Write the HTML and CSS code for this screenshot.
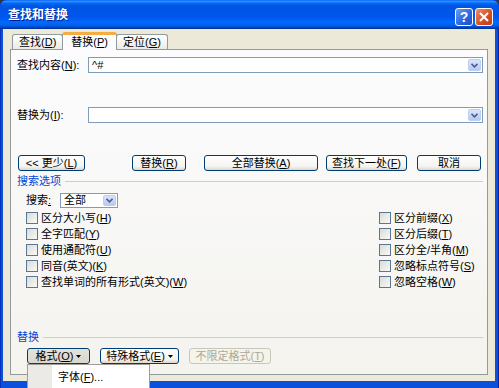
FILE: index.html
```html
<!DOCTYPE html>
<html lang="zh-CN">
<head>
    <meta charset="UTF-8">
    <meta name="viewport" content="width=device-width, initial-scale=1.0">
    <title>查找和替换</title>
    <link rel="stylesheet" href="styles.css">
</head>
<body>
    <div class="window">
        <div class="titlebar">
            <span class="title">查找和替换</span>
            <span class="tb-btn tb-help">?</span>
            <span class="tb-btn tb-close">
                <svg width="10" height="10" viewBox="0 0 10 10"><path d="M1 1L9 9M9 1L1 9" stroke="#fff" stroke-width="2"/></svg>
            </span>
        </div>

        <div class="client">
            <div class="tabs">
                <span class="tab">查找(<u>D</u>)</span>
                <span class="tab active">替换(<u>P</u>)</span>
                <span class="tab">定位(<u>G</u>)</span>
            </div>

            <div class="panel">
                <div class="field-row">
                    <span class="field-label">查找内容(<u>N</u>):</span>
                    <div class="combo">
                        <span class="combo-text">^#</span>
                        <span class="combo-arrow"><svg width="7" height="5" viewBox="0 0 7 5"><path d="M0.5 0.8L3.5 3.8L6.5 0.8" fill="none" stroke="#4d6185" stroke-width="1.6"/></svg></span>
                    </div>
                </div>
                <div class="field-row">
                    <span class="field-label">替换为(<u>I</u>):</span>
                    <div class="combo">
                        <span class="combo-text"></span>
                        <span class="combo-arrow"><svg width="7" height="5" viewBox="0 0 7 5"><path d="M0.5 0.8L3.5 3.8L6.5 0.8" fill="none" stroke="#4d6185" stroke-width="1.6"/></svg></span>
                    </div>
                </div>

                <div class="btn-row">
                    <button class="btn btn-less"><span>&lt;&lt; 更少(<u>L</u>)</span></button>
                    <button class="btn btn-replace"><span>替换(<u>R</u>)</span></button>
                    <button class="btn btn-all"><span>全部替换(<u>A</u>)</span></button>
                    <button class="btn btn-next"><span>查找下一处(<u>F</u>)</span></button>
                    <button class="btn btn-cancel"><span>取消</span></button>
                </div>

                <div class="group-title">搜索选项</div>

                <div class="search-row">
                    <span class="search-label">搜索<u>:</u></span>
                    <div class="combo combo-small">
                        <span class="combo-text">全部</span>
                        <span class="combo-arrow"><svg width="7" height="5" viewBox="0 0 7 5"><path d="M0.5 0.8L3.5 3.8L6.5 0.8" fill="none" stroke="#4d6185" stroke-width="1.6"/></svg></span>
                    </div>
                </div>

                <div class="options">
                    <label class="opt"><span class="check"></span><span>区分大小写(<u>H</u>)</span></label>
                    <label class="opt"><span class="check"></span><span>全字匹配(<u>Y</u>)</span></label>
                    <label class="opt"><span class="check"></span><span>使用通配符(<u>U</u>)</span></label>
                    <label class="opt"><span class="check"></span><span>同音(英文)(<u>K</u>)</span></label>
                    <label class="opt"><span class="check"></span><span>查找单词的所有形式(英文)(<u>W</u>)</span></label>
                    <label class="opt"><span class="check"></span><span>区分前缀(<u>X</u>)</span></label>
                    <label class="opt"><span class="check"></span><span>区分后缀(<u>T</u>)</span></label>
                    <label class="opt"><span class="check"></span><span>区分全/半角(<u>M</u>)</span></label>
                    <label class="opt"><span class="check"></span><span>忽略标点符号(<u>S</u>)</span></label>
                    <label class="opt"><span class="check"></span><span>忽略空格(<u>W</u>)</span></label>
                </div>

                <div class="replace-group">
                    <div class="group-title">替换</div>
                    <div class="btn-row bottom-row">
                        <button class="btn btn-format pressed"><span>格式(<u>O</u>)</span><svg width="5" height="3" viewBox="0 0 5 3"><path d="M0 0H5L2.5 3Z" fill="#000"/></svg></button>
                        <button class="btn btn-special"><span>特殊格式(<u>E</u>)</span><svg width="5" height="3" viewBox="0 0 5 3"><path d="M0 0H5L2.5 3Z" fill="#000"/></svg></button>
                        <button class="btn btn-nofmt" disabled><span>不限定格式(<u>T</u>)</span></button>
                    </div>
                </div>
            </div>
        </div>

        <!-- menú desplegado de "格式" -->
        <div class="menu">
            <span class="menu-strip"></span>
            <span class="menu-item">字体(<u>F</u>)...</span>
        </div>
    </div>
</body>
</html>
```

FILE: styles.css
```css
* {
    box-sizing: border-box;
    margin: 0;
    padding: 0;
}

body {
    width: 499px;
    height: 388px;
    overflow: hidden;
    background: #2c3654;
    font-family: "Liberation Sans", "Noto Sans CJK SC", sans-serif;
    font-size: 11px;
    line-height: 13px;
    color: #000;
}

u {
    text-decoration: underline;
    text-underline-offset: 1px;
}

.window {
    position: relative;
    height: 388px;
    background: #0a50dc;
    border-radius: 7px 7px 0 0;
    box-shadow: inset 1px 0 #0832b8, inset -1px 0 #0025a0;
}

/* barra de título */
.titlebar {
    height: 29px;
    display: flex;
    align-items: flex-start;
    padding-left: 8px;
    border-radius: 7px 7px 0 0;
    background: linear-gradient(to bottom, #0058ee 0%, #3593ff 4%, #288eff 6%, #127dff 8%, #036ffc 10%, #0262ee 14%, #0057e5 20%, #0054e3 24%, #0055eb 56%, #005bf5 66%, #026afe 76%, #0062ef 86%, #0052d6 92%, #0040ab 96%, #003092 100%);
}

.title {
    margin-top: 8px;
    font-size: 12px;
    line-height: 14px;
    font-weight: 700;
    color: #fff;
    text-shadow: 1px 1px 0 #0a1c8a;
}

.tb-btn {
    width: 18px;
    height: 18px;
    margin-top: 8px;
    border: 1px solid #fff;
    border-radius: 3px;
    display: flex;
    align-items: center;
    justify-content: center;
    color: #fff;
    font: 700 14px "Liberation Sans", sans-serif;
}

.tb-help {
    margin-left: auto;
    background: linear-gradient(135deg, #6a9ef9, #2a63de 60%, #1f52c8);
}

.tb-close {
    margin-left: 2px;
    margin-right: 6px;
    background: linear-gradient(135deg, #ee8c66, #d54d22 60%, #c03f17);
}

/* área cliente */
.client {
    height: 352px;
    margin: 0 4px 0 3px;
    padding: 3px 7px 6px 7px;
    background: #ece9d8;
    display: flex;
    flex-direction: column;
}

.tabs {
    height: 17px;
    display: flex;
    align-items: flex-end;
    padding-left: 2px;
}

.tab {
    height: 15px;
    padding: 0 6px;
    border: 1px solid #919b9c;
    border-bottom: none;
    border-radius: 3px 3px 0 0;
    background: linear-gradient(#ffffff, #ecebe6);
    line-height: 14px;
}

.tab.active {
    position: relative;
    z-index: 1;
    height: 18px;
    margin: 0 -1px -1px;
    padding: 0 8px;
    border-top: 3px solid #f4ad45;
    background: #fcfcfe;
    line-height: 14px;
}

.panel {
    flex: 1;
    display: flex;
    flex-direction: column;
    padding: 7px 4px 10px 6px;
    border: 1px solid #919b9c;
    background: linear-gradient(#fcfcfe, #f4f3ee);
}

.field-row {
    height: 16px;
    display: flex;
    align-items: center;
}

.field-row + .field-row {
    margin-top: 34px;
}

.field-label {
    width: 71px;
}

.combo {
    flex: 1;
    height: 16px;
    display: flex;
    align-items: center;
    padding-left: 3px;
    border: 1px solid #7f9db9;
    background: #fff;
}

.combo-text {
    flex: 1;
}

.combo-arrow {
    width: 13px;
    height: 12px;
    margin-right: 1px;
    display: flex;
    align-items: center;
    justify-content: center;
    border: 1px solid #bccdf6;
    border-radius: 2px;
    background: linear-gradient(#dbe5fc, #b6c9f6);
}

/* botones */
.btn-row {
    height: 16px;
    margin-top: 32px;
    display: flex;
}

.btn {
    height: 16px;
    padding: 0;
    border: 1px solid #003c74;
    border-radius: 3px;
    background: linear-gradient(#ffffff, #f4f3ef 75%, #dcd7cc);
    font: inherit;
    line-height: 13px;
    color: #000;
    white-space: nowrap;
    display: flex;
    align-items: center;
    justify-content: center;
    gap: 3px;
}

.btn-less { width: 67px; margin-left: 1px; }
.btn-replace { width: 54px; margin-left: 47px; }
.btn-all { width: 114px; margin-left: 18px; }
.btn-next { width: 81px; margin-left: 8px; }
.btn-cancel { width: 64px; margin-left: 10px; }

.group-title {
    height: 13px;
    margin-top: 4px;
    display: flex;
    align-items: center;
    color: #0046d5;
}

.group-title::after {
    content: '';
    flex: 1;
    margin-left: 4px;
    border-top: 1px solid #d0d0bf;
}

.search-row {
    height: 15px;
    margin-top: 5px;
    padding-left: 9px;
    display: flex;
    align-items: center;
}

.search-label {
    width: 34px;
}

.combo-small {
    flex: none;
    width: 58px;
    height: 15px;
}

.combo-small .combo-arrow {
    height: 11px;
}

.options {
    margin-top: 2px;
    padding-left: 9px;
    display: grid;
    grid-template-rows: repeat(5, 16px);
    grid-template-columns: 353px auto;
    grid-auto-flow: column;
    white-space: nowrap;
}

.opt {
    display: flex;
    align-items: center;
    gap: 3px;
}

.check {
    width: 12px;
    height: 12px;
    border: 1px solid #5a7896;
    background: linear-gradient(135deg, #dcdcd6, #f8f8f6);
}

.replace-group {
    margin-top: auto;
}

.bottom-row {
    margin-top: 4px;
    padding-left: 10px;
}

.btn-format { width: 63px; }
.btn-special { width: 79px; margin-left: 10px; }
.btn-nofmt { width: 82px; margin-left: 10px; }

.btn.pressed {
    background: linear-gradient(#e4e3dc, #d8d6cd);
}

.btn:disabled {
    border-color: #c9c7ba;
    background: #f5f4ea;
    color: #aca899;
}

/* menú emergente */
.menu {
    position: absolute;
    left: 27px;
    top: 364px;
    width: 123px;
    height: 30px;
    display: flex;
    border: 1px solid #a09e96;
    background: #fff;
}

.menu-strip {
    width: 24px;
    background: #ebeae6;
}

.menu-item {
    padding: 6px 0 0 6px;
}
```
